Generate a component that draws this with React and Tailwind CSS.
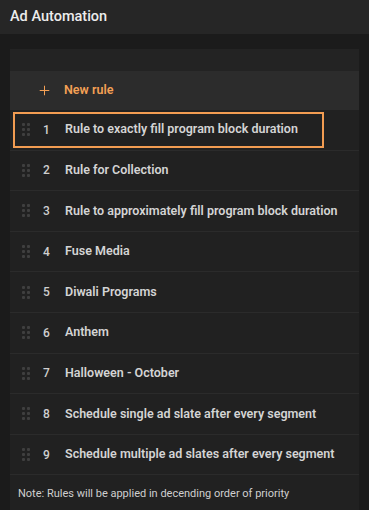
import { Plus } from 'lucide-react'

const rules = [
  'Rule to exactly fill program block duration',
  'Rule for Collection',
  'Rule to approximately fill program block duration',
  'Fuse Media',
  'Diwali Programs',
  'Anthem',
  'Halloween - October',
  'Schedule single ad slate after every segment',
  'Schedule multiple ad slates after every segment',
]

function DragHandle() {
  return (
    <div className="grid grid-cols-2 gap-x-[2px] gap-y-[2px]">
      {[0, 1, 2, 3, 4, 5].map((i) => (
        <span key={i} className="block h-[3px] w-[3px] rounded-[1px] bg-[#3f3f3f]" />
      ))}
    </div>
  )
}

export default function App() {
  return (
    <div
      className="flex h-[510px] w-[369px] flex-col overflow-hidden bg-[#1b1b1b]"
      style={{ fontFamily: 'Roboto, "Liberation Sans", sans-serif' }}
    >
      <header className="flex h-[34px] items-center bg-[#262626] px-[10px]">
        <h1 className="text-[14.5px] font-medium text-[#ececec]">Ad Automation</h1>
      </header>

      <main className="mt-[15px] ml-[10px] w-[349px] flex-1 bg-[#212121]">
        <div className="h-[22px] bg-[#232323]" />

        <button className="flex h-[39px] w-full items-center bg-[#2c2c2c] pl-[27px] text-[12.5px] font-semibold text-[#f4a055]">
          <Plus size={15} strokeWidth={1.6} className="mr-[12px]" />
          New rule
        </button>

        <ul>
          {rules.map((rule, i) => (
            <li
              key={rule}
              className="flex h-[40.6px] items-center border-b border-[#2b2b2b] pl-[3px]"
            >
              <div
                className={
                  'flex h-[36px] items-center pl-[7px] ' +
                  (i === 0 ? 'w-[311px] border-2 border-[#f29c52]' : 'w-full border-2 border-transparent')
                }
              >
                <DragHandle />
                <span className="ml-[13px] w-[22px] text-[12px] font-medium text-[#cfcfcf]">{i + 1}</span>
                <span className="text-[12.5px] font-semibold text-[#d4d4d4]">{rule}</span>
              </div>
            </li>
          ))}
        </ul>

        <p className="pt-[11px] pl-[8px] text-[11px] text-[#cfcfcf]">
          Note: Rules will be applied in decending order of priority
        </p>
      </main>
    </div>
  )
}
